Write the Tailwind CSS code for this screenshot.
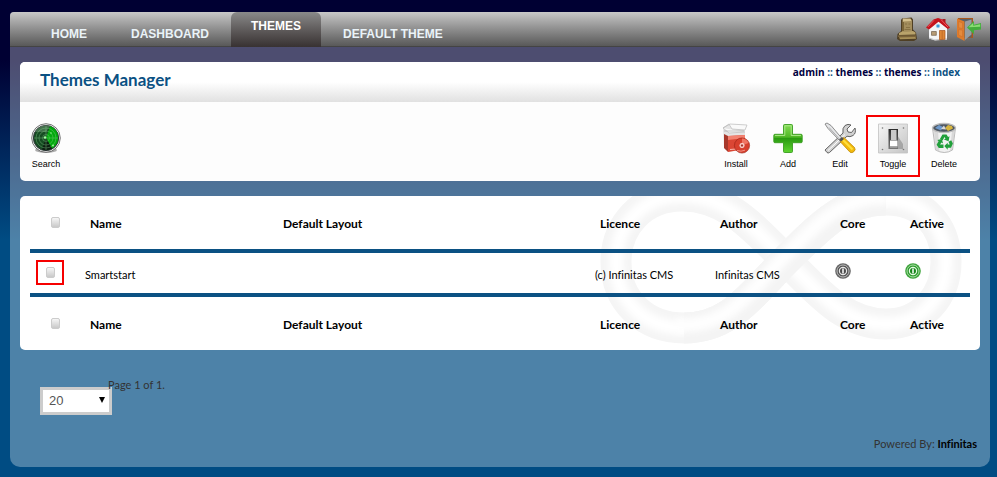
<!DOCTYPE html>
<html lang="en">
<head>
<meta charset="utf-8">
<meta name="viewport" content="width=device-width, initial-scale=1">
<title>Themes Manager</title>
<script src="https://cdn.jsdelivr.net/npm/@tailwindcss/browser@4"></script>
</head>
<body class="flex min-h-screen flex-col bg-[#004c83] bg-linear-[180deg,#000033_60px,#004c83_240px] pt-3 pr-[7px] pb-[10px] pl-[10px] font-['Trebuchet_MS',Lato,sans-serif] text-[11px] leading-4 text-black [font-variant-ligatures:none]">
<div class="flex grow flex-col rounded-t-[4px] rounded-b-[10px] bg-white/30">

  <header class="flex h-[35px] items-stretch justify-between rounded-t-[4px] border-b border-[#444] bg-linear-to-b from-[#c8c8c8] to-[#595959]">
    <nav class="flex pl-[19px] font-['Liberation_Sans',Arial,sans-serif] text-xs font-bold text-[#eaf3f8]">
      <a href="#" class="px-[22px] pt-[14px]">HOME</a>
      <a href="#" class="px-[22px] pt-[14px]">DASHBOARD</a>
      <a href="#" aria-current="page" class="-mb-px rounded-t-[6px] bg-linear-to-b from-[#8a8a8a] to-[#383232] px-5 pt-[6px] text-white">THEMES</a>
      <a href="#" class="px-[22px] pt-[14px]">DEFAULT THEME</a>
    </nav>
    <div class="flex items-center gap-[7px] pr-[9px]">
      <a href="#" aria-label="Site administration">
        <svg class="size-6" viewBox="0 0 24 24">
          <path d="M7 1.500 16.500 .5l1.500 2v10l3 3 1 6.500-3 2H5l-3-2 .5-5L6 14V3z" fill="#4f3f25"/>
          <path d="M7.500 2h8.500l1 2v10l-10 1z" fill="#a38d5c"/>
          <path d="M8 1.500h7.500l1 2.500-8.500.5z" fill="#d5c08d"/>
          <path d="M7 5h2v9H7z" fill="#7a6437"/>
          <path d="M10 7h2M13.500 7h2M11 10.500h4M9.500 12.500h6" stroke="#80693c" stroke-width=".8"/>
          <path d="m4 16 3-1.500 11-.5 2.500 1.500v2L4 18z" fill="#b9a36b"/>
          <path d="M3 18.500h18v1.200H3z" fill="#8d7342"/>
          <path d="m4 20.200 16.500-.3.5 1.800-16 .5z" fill="#a89058"/>
        </svg>
      </a>
      <a href="#" aria-label="Home">
        <svg class="size-6" viewBox="0 0 24 24">
          <path d="M16.500 2h3v5h-3z" fill="#a51e22"/>
          <path d="M3 11 12 3.500 21 11v11.500L9 23.500l-6-2z" fill="#f4f5f7"/>
          <path d="m3 20.500 6 2 12-1V23H9l-6-1.500z" fill="#b9bbbf"/>
          <path d="M0 10.500 7.500 2.500 12 1l4.500 1.500 7.500 8-2.200 1.600L12.500 4.800 3 12.500z" fill="#c4131d"/>
          <path d="m2 9.800 6-6.500M15 2.600l7 7.500" stroke="#ee5960" stroke-width="1"/>
          <circle cx="12" cy="9" r="1.800" fill="#3e9ad8" stroke="#9ccaea" stroke-width=".6"/>
          <path d="M5.500 14.500h4.800v3.800H5.500z" fill="#b69b76" stroke="#71604c" stroke-width=".7"/>
          <path d="M13.500 13.500h5.500v8.800l-5.500.4z" fill="#dd8737" stroke="#a95218" stroke-width=".7"/>
          <path d="M16.200 14v8" stroke="#a95218" stroke-width=".5"/>
        </svg>
      </a>
      <a href="#" aria-label="Log out">
        <svg class="size-6" viewBox="0 0 24 24">
          <path d="M1 1h15v20H1z" fill="#a9581d"/>
          <path d="M3 2h11.500v18.500H3z" fill="#5a6269"/>
          <path d="m8 4.500 6.500-2v15L8 23z" fill="#969da3"/>
          <path d="M0 1.500 7.500 4.500V24L0 20z" fill="#de7b2b"/>
          <path d="m1.600 4.500 4 1.500v5.500l-4-.8zM1.600 12.500l4 .8v6.500l-4-1.800z" fill="#e58b3e" stroke="#c96d28" stroke-width=".5"/>
          <path d="M10 10.500 17 4v3.700L24 6v6.500l-7 .7v4z" fill="#43ad3d"/>
          <path d="m11.500 10.300 4.700-4.200v2.600l7-1.500v2.600z" fill="#89dc73"/>
        </svg>
      </a>
    </div>
  </header>

  <main class="flex flex-col px-[10px] pt-[15px]">
    <section class="overflow-hidden rounded-[5px] bg-[#fdfdfd]">
      <div class="flex h-10 items-start justify-between bg-linear-to-b from-white from-50% to-[#e1e1e1] pr-5 pl-5">
        <h1 class="pt-[6px] text-[17px] leading-6 font-bold text-[#0b5183]">Themes Manager</h1>
        <p class="pt-[2px] font-['Open_Sans',sans-serif] text-[10px] font-bold text-[#0b5183]"><a href="#" class="text-[#000040]">admin</a> :: <a href="#" class="text-[#000040]">themes</a> :: <a href="#" class="text-[#000040]">themes</a> :: index</p>
      </div>
      <div class="flex h-[79px] justify-between pt-[13px] pr-[10px] pb-1 font-['Liberation_Sans',Arial,sans-serif] text-[9px] leading-[10px]">
        <button type="button" class="flex w-[52px] flex-col items-center gap-[5px] pt-[7px]">
          <svg class="size-8" viewBox="0 0 32 32">
            <ellipse cx="16" cy="28" rx="11" ry="3" fill="#777" opacity=".6"/>
            <circle cx="16" cy="16" r="14.300" fill="#ececec" stroke="#555" stroke-width=".8"/>
            <circle cx="16" cy="16" r="12.600" fill="#164c22" stroke="#30363a" stroke-width="1"/>
            <path d="M16 16 20 4a12.500 12.500 0 0 1 2 22.500z" fill="#03a90d"/>
            <path d="m16 16 6 10.500a12.500 12.500 0 0 1-10 1z" fill="#0b1f10"/>
            <path d="M5 10a12.500 12.500 0 0 1 15-6l-4 6z" fill="#638c69" opacity=".6"/>
            <g fill="none" stroke="#8fd493" stroke-width=".6" opacity=".6"><circle cx="16" cy="16" r="3.500"/><circle cx="16" cy="16" r="7"/><circle cx="16" cy="16" r="10"/><path d="M16 4v24M4 16h24"/></g>
            <g fill="#a4ffa1"><circle cx="23" cy="23.500" r=".9"/><circle cx="21" cy="11" r=".7"/><circle cx="15" cy="15.500" r="1.200"/></g>
          </svg>
          <span>Search</span>
        </button>
        <div class="flex">
          <button type="button" class="flex w-[52px] flex-col items-center gap-[5px] pt-[7px]">
            <svg class="size-8" viewBox="0 0 32 32">
              <path d="m3 6 6-4 18 1-2 5v19l-16 3-5-4z" fill="#e5e5e5"/>
              <path d="m3 6 6-4 3 5 13 1 2-5-17-1-7 4 6 5 16-1" fill="#fafafa" stroke="#bbb" stroke-width=".7"/>
              <path d="m4 12 4 2v16l-4-4z" fill="#a7392c"/>
              <path d="m8 14 17-1v14L8 30z" fill="#db4634"/>
              <path d="m8 14 17-1v3L8 18z" fill="#f38271"/>
              <path d="m10 27.500 6-.5" stroke="#ffd7cf" stroke-width=".8"/>
              <path d="M4 9h20" stroke="#aaa" stroke-width=".7"/>
              <circle cx="22" cy="23.500" r="7.600" fill="#d73f2d" stroke="#972215" stroke-width=".6"/>
              <path d="M22 16.500a7 7 0 0 1 6.500 4.500L22 23.500z" fill="#ef7563"/>
              <circle cx="22" cy="23.500" r="2.200" fill="#f1aaa0" stroke="#fff" stroke-width=".6"/><circle cx="22" cy="23.500" r=".9" fill="#8e2116"/>
              <path d="M17 28.500q4 1.500 8-.3" stroke="#ffb9ad" stroke-width=".7" fill="none"/>
            </svg>
            <span>Install</span>
          </button>
          <button type="button" class="flex w-[52px] flex-col items-center gap-[5px] pt-[7px]">
            <svg class="size-8" viewBox="0 0 32 32">
              <defs><linearGradient id="plus" x1="0" y1="0" x2="0" y2="1"><stop offset="0" stop-color="#83db53"/><stop offset=".45" stop-color="#4fb825"/><stop offset=".5" stop-color="#2a9b11"/><stop offset="1" stop-color="#5fd431"/></linearGradient></defs>
              <path d="M12.500 2.500h7q1 0 1 1v8.800h8.700q1 0 1 1v6.400q0 1-1 1h-8.700v8.800q0 1-1 1h-7q-1 0-1-1v-8.800H2.800q-1 0-1-1v-6.400q0-1 1-1h8.700V3.500q0-1 1-1z" fill="url(#plus)" stroke="#3a9d20" stroke-width=".9"/>
              <path d="M12.800 13.500V3.800h6.400v9.700h9.700M3 13.500h9.800" fill="none" stroke="#b7ef98" stroke-width=".8"/>
            </svg>
            <span>Add</span>
          </button>
          <button type="button" class="flex w-[52px] flex-col items-center gap-[5px] pt-[7px]">
            <svg class="size-8" viewBox="0 0 32 32">
              <path d="M3 30.500 1 28l18-17q-1-5 2-7.500 3-2 6-.5l-4 4 1 3 3.500.5L31 6q1.500 5-2 7.500-3 2-6 .7L5.500 30.500q-1.500 1-2.500 0z" fill="#d1d1d1" stroke="#555" stroke-width=".9"/>
              <path d="M4 28.500 21 12.500" stroke="#fff" stroke-width="1"/>
              <path d="m1 2 2-1 4 2.500 11 13-2.500 2L4 6.500z" fill="#e5e6e8" stroke="#737373" stroke-width=".8"/>
              <path d="M5 5.500 15.500 17" stroke="#888" stroke-width=".6"/>
              <path d="m17 17 3-1.500 10.500 10q1.500 2-.5 4t-4 .7L16.500 20z" fill="#f2b90d" stroke="#b78505" stroke-width=".7"/>
              <path d="m19 18 9.500 9.500" stroke="#ffe03f" stroke-width="2"/>
              <path d="m15 17.500 3-2.500 2 2-3 2.500z" fill="#555"/>
            </svg>
            <span>Edit</span>
          </button>
          <button type="button" class="-mr-[2px] flex w-[54px] flex-col items-center gap-[5px] border-2 border-[#f60000] pt-[5px]">
            <svg class="size-8" viewBox="0 0 32 32">
              <defs><linearGradient id="plate" x1="0" y1="0" x2="1" y2="1"><stop offset="0" stop-color="#f6f6f6"/><stop offset="1" stop-color="#c4c4c4"/></linearGradient><linearGradient id="slot" x1="0" y1="0" x2="0" y2="1"><stop offset="0" stop-color="#2b2b2b"/><stop offset="1" stop-color="#777"/></linearGradient></defs>
              <path d="M1.500 2h29v29h-29z" fill="url(#plate)" stroke="#c2c2c2" stroke-width=".8"/>
              <g fill="#777"><circle cx="5.500" cy="6" r=".8"/><circle cx="26.500" cy="6" r=".8"/><circle cx="5.500" cy="27.500" r=".8"/><circle cx="26.500" cy="27.500" r=".8"/></g>
              <path d="m20 13 6 9v5h-6z" fill="#888" opacity=".6"/>
              <path d="M11.500 7H21v20h-9.500z" fill="url(#slot)"/>
              <path d="M14 8h5.500v10H14z" fill="#c9c9c9"/>
              <path d="M13 18.500h7.500v6H13z" fill="#fff"/>
              <path d="M13 24.500h7.500v1.500H13z" fill="#9b9b9b"/>
            </svg>
            <span>Toggle</span>
          </button>
          <button type="button" class="flex w-[52px] flex-col items-center gap-[5px] pt-[7px]">
            <svg class="size-8" viewBox="0 0 32 32">
              <path d="M4.500 6h23l-3 22q-8 5-17 0z" fill="#f1f1f1" stroke="#aaa" stroke-width=".8"/>
              <path d="M6 9h4l1.500 21-4-2zM24 9h3l-3 19-2 1z" fill="#cfcfcf" opacity=".7"/>
              <ellipse cx="16" cy="6" rx="11.500" ry="4.500" fill="#4d5660" stroke="#bfbfbf" stroke-width="1.400"/>
              <path d="m7 6 4-3 4 2-2 3.500z" fill="#6f9acc"/><path d="m17 6 3-3 4 1 1 2.500-5 2.500z" fill="#d7b53f"/><path d="m13 7 3-3.500 2 4z" fill="#dadada"/>
              <g fill="#21a03b"><path d="m12 16.800 2.500-4.300h4l1.600 2.600 1.400-.8-.9 4.900-4.700-1.700 1.600-.9-1-1.600-1.900 3.600z"/><path d="m9.300 18 4.500-.9 1.300 4.300-1.600-.8-1.400 2h3.400v3.300h-4.700l-2.200-3.200 2-3.400z"/><path d="m20.500 19.800 2.700-1.500 1.700 3.200-1.900 4.300h-3.300v1.900l-3.400-3.600 3.400-3.300v1.700h2z"/></g>
            </svg>
            <span>Delete</span>
          </button>
        </div>
      </div>
    </section>

    <section class="relative mt-[15px] overflow-hidden rounded-[5px] bg-white px-[10px]">
      <svg class="pointer-events-none absolute top-0 right-[18px] h-[154px] w-[362px]" viewBox="0 0 362 154" fill="none" aria-hidden="true">
        <defs><filter id="soft" x="-10%" y="-20%" width="120%" height="140%"><feGaussianBlur stdDeviation="3"/></filter></defs>
        <path d="M186 64C150 28 125 0 82 0C42 0 16 30 16 66C16 105 45 132 84 132C130 132 150 100 186 64C222 28 245 4 286 4C325 4 346 32 346 66C346 100 322 128 286 128C245 128 220 98 186 64Z" stroke="#f5f5f5" stroke-width="31"/>
        <path d="M186 64C150 28 125 0 82 0C42 0 16 30 16 66C16 105 45 132 84 132C130 132 150 100 186 64C222 28 245 4 286 4C325 4 346 32 346 66C346 100 322 128 286 128C245 128 220 98 186 64Z" stroke="#fff" stroke-width="14" filter="url(#soft)"/>
        <path d="M84 132C130 132 150 100 186 64C222 28 245 4 286 4" stroke="#f4f4f4" stroke-width="31"/>
        <path d="M76 129C126 133 148 98 184 61C220 25 243 0 288 2" stroke="#fefefe" stroke-width="14" filter="url(#soft)"/>
      </svg>
      <table class="relative w-full table-fixed border-collapse text-left">
        <colgroup><col class="w-[50px]"><col class="w-[193px]"><col><col class="w-[120px]"><col class="w-[120px]"><col class="w-[70px]"><col class="w-[70px]"></colgroup>
        <thead class="text-xs">
          <tr class="h-[55px] border-b-4 border-[#0b5183]">
            <th class="pl-[21px]"><input type="checkbox" aria-label="Select all themes" class="block h-[11px] w-[9px] appearance-none rounded-[2px] border border-[#ccc] bg-linear-to-b from-[#f6f6f6] to-[#c9c9c9]"></th>
            <th class="pt-[2px] pl-[10px]">Name</th><th class="pt-[2px] pl-[10px]">Default Layout</th><th class="pt-[2px] pl-[10px]">Licence</th><th class="pt-[2px] pl-[10px]">Author</th><th class="pt-[2px] pl-[10px]">Core</th><th class="pt-[2px] pl-[10px]">Active</th>
          </tr>
        </thead>
        <tbody>
          <tr class="h-[44px]">
            <td class="pb-[2px] pl-[6px]"><label class="flex h-[25px] w-7 items-center justify-center border-2 border-[#f60000]"><input type="checkbox" aria-label="Select Smartstart" class="block h-[11px] w-[9px] appearance-none rounded-[2px] border border-[#ccc] bg-linear-to-b from-[#f6f6f6] to-[#c9c9c9]"></label></td>
            <td class="pt-1 pl-[5px]">Smartstart</td><td></td><td class="pt-1 pl-[5px]">(c) Infinitas CMS</td><td class="pt-1 pl-[5px]">Infinitas CMS</td>
            <td class="pb-1 pl-[5px]"><svg class="size-4" viewBox="0 0 16 16" role="img" aria-label="Not core"><circle cx="8" cy="8" r="7.800" fill="#666"/><circle cx="8" cy="8" r="6" fill="#555" stroke="#c4c4c4" stroke-width=".9"/><circle cx="8" cy="8" r="3.600" fill="#4c4c4c" stroke="#e8e8e8" stroke-width="1.200"/><path d="M8 5.500v5" stroke="#fff" stroke-width="1.500"/></svg></td>
            <td class="pb-1 pl-[5px]"><svg class="size-4" viewBox="0 0 16 16" role="img" aria-label="Active"><circle cx="8" cy="8" r="7.800" fill="#3da43b"/><circle cx="8" cy="8" r="6" fill="#2f9c30" stroke="#b4e3b1" stroke-width=".9"/><circle cx="8" cy="8" r="3.600" fill="#16851a" stroke="#e6fbe4" stroke-width="1.200"/><path d="M8 5.500v5" stroke="#fff" stroke-width="1.500"/></svg></td>
          </tr>
        </tbody>
        <tfoot class="text-xs">
          <tr class="h-[55px] border-t-4 border-[#0b5183]">
            <th class="pl-[21px]"><input type="checkbox" aria-label="Select all themes" class="block h-[11px] w-[9px] appearance-none rounded-[2px] border border-[#ccc] bg-linear-to-b from-[#f6f6f6] to-[#c9c9c9]"></th>
            <th class="pt-[2px] pl-[10px]">Name</th><th class="pt-[2px] pl-[10px]">Default Layout</th><th class="pt-[2px] pl-[10px]">Licence</th><th class="pt-[2px] pl-[10px]">Author</th><th class="pt-[2px] pl-[10px]">Core</th><th class="pt-[2px] pl-[10px]">Active</th>
          </tr>
        </tfoot>
      </table>
    </section>

    <div class="flex items-start pt-[27px] pl-5 text-[#333]">
      <div class="relative mt-[10px]">
        <select aria-label="Rows per page" class="block h-7 w-[72px] appearance-none border-3 border-[#ccc] bg-white pl-[6px] font-['Liberation_Sans',Arial,sans-serif] text-[13px] leading-4 text-[#555]"><option>20</option><option>50</option></select>
        <svg class="pointer-events-none absolute top-[10px] right-[7px] h-[6px] w-[6px]" viewBox="0 0 6 6" aria-hidden="true"><path d="M0 0h6L3 6z"/></svg>
      </div>
      <p class="relative -ml-1">Page 1 of 1.</p>
    </div>
  </main>

  <footer class="mt-auto pr-[13px] pb-[15px] text-right text-[#333]">Powered By: <a href="#" class="font-bold text-black">Infinitas</a></footer>
</div>
</body>
</html>
